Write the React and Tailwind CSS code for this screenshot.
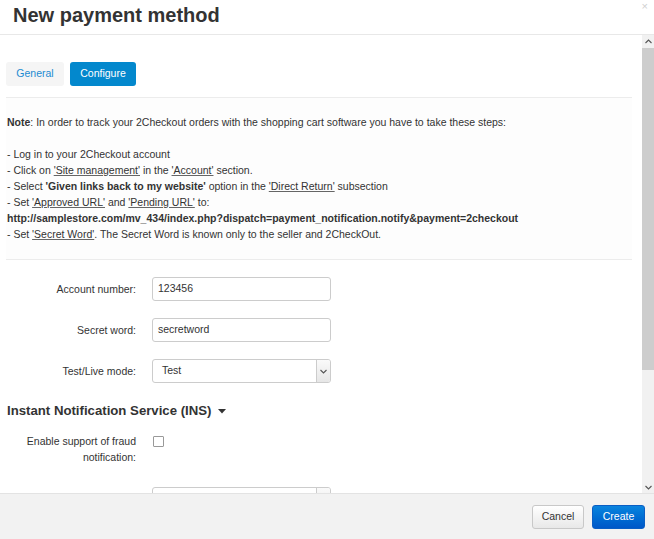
import React from "react";

function Chevron({ up = false }) {
  return (
    <svg width="7" height="5" viewBox="0 0 7 5" className="block">
      {up ? (
        <path d="M0.5 4 L3.5 1 L6.5 4" fill="none" stroke="#555" strokeWidth="1.1" />
      ) : (
        <path d="M0.5 1 L3.5 4 L6.5 1" fill="none" stroke="#555" strokeWidth="1.1" />
      )}
    </svg>
  );
}

function FakeSelect({ value }) {
  return (
    <div className="w-[179px] h-[24px] border border-[#ccc] rounded-[3px] flex items-stretch bg-white">
      <div className="flex-1 flex items-center pl-[9px] text-[10.5px] text-[#333]">{value}</div>
      <div className="w-[14px] border-l border-[#ccc] bg-gradient-to-b from-[#fafafa] to-[#e6e6e6] flex items-center justify-center rounded-r-[2px]">
        <Chevron />
      </div>
    </div>
  );
}

function Row({ label, children }) {
  return (
    <div className="flex items-center">
      <div className="w-[130px] text-right text-[10.5px] text-[#333] leading-[16px]">{label}</div>
      <div className="ml-[16px]">{children}</div>
    </div>
  );
}

function Input({ value }) {
  return (
    <div className="w-[179px] h-[24px] border border-[#ccc] rounded-[3px] flex items-center pl-[5px] text-[10.5px] text-[#333] bg-white">
      {value}
    </div>
  );
}

const U = ({ children }) => <span className="underline decoration-[#666]">{children}</span>;

export default function App() {
  return (
    <div className="w-[654px] h-[539px] flex flex-col bg-white font-['Liberation_Sans',Arial,sans-serif] text-[#333] overflow-hidden">
      <div className="relative h-[35px] border-b border-[#e8e8e8] shrink-0">
        <h1 className="pl-[13px] pt-[3px] text-[20px] leading-[24px] font-bold text-[#333]">New payment method</h1>
        <span className="absolute right-[6px] top-[0px] text-[11px] leading-[12px] text-[#d0d0d0]">×</span>
      </div>

      <div className="flex flex-1 min-h-0">
        <div className="flex-1 overflow-hidden pl-[6px] pr-[10px]">
          <div className="pt-[27px] flex gap-[6px]">
            <div className="w-[58px] h-[24px] rounded-[3px] bg-[#f5f5f5] flex items-center justify-center text-[10.5px] text-[#1d8bd1]">General</div>
            <div className="w-[66px] h-[24px] rounded-[3px] bg-[#0388cd] flex items-center justify-center text-[10.5px] text-white">Configure</div>
          </div>

          <div className="mt-[11px] border-t border-b border-[#ececec] bg-[#fdfdfd] pt-[16px] pb-[17px] pl-[1px] text-[10.5px] leading-[16px] text-[#333]">
            <div><b>Note</b>: In order to track your 2Checkout orders with the shopping cart software you have to take these steps:</div>
            <div className="h-[16px]" />
            <div>- Log in to your 2Checkout account</div>
            <div>- Click on <U>'Site management'</U> in the <U>'Account'</U> section.</div>
            <div>- Select <b>'Given links back to my website'</b> option in the <U>'Direct Return'</U> subsection</div>
            <div>- Set <U>'Approved URL'</U> and <U>'Pending URL'</U> to:</div>
            <div className="font-bold">http://samplestore.com/mv_434/index.php?dispatch=payment_notification.notify&amp;payment=2checkout</div>
            <div>- Set <U>'Secret Word'</U>. The Secret Word is known only to the seller and 2CheckOut.</div>
          </div>

          <div className="mt-[17px] flex flex-col gap-[17px]">
            <Row label="Account number:"><Input value="123456" /></Row>
            <Row label="Secret word:"><Input value="secretword" /></Row>
            <Row label="Test/Live mode:"><FakeSelect value="Test" /></Row>
          </div>

          <div className="mt-[18px] pl-[1px] flex items-center gap-[7px] text-[13.2px] leading-[20px] font-bold text-[#333]">
            <span>Instant Notification Service (INS)</span>
            <svg width="8" height="5" viewBox="0 0 8 5"><path d="M0 0 L8 0 L4 4.5 Z" fill="#333" /></svg>
          </div>

          <div className="mt-[12px] flex items-start">
            <div className="w-[130px] text-right text-[10.5px] leading-[16px] text-[#333]">Enable support of fraud notification:</div>
            <div className="ml-[17px] mt-[3px] w-[11px] h-[11px] border border-[#999] rounded-[1px] bg-white" />
          </div>

          <div className="mt-[22px] ml-[146px]">
            <FakeSelect value="" />
          </div>
        </div>

        <div className="w-[12px] shrink-0 flex flex-col bg-[#f1f1f1]">
          <div className="h-[13px] flex items-center justify-center"><Chevron up /></div>
          <div className="h-[322px] bg-[#cdcdcd]" />
          <div className="flex-1" />
          <div className="h-[12px] flex items-center justify-center"><Chevron /></div>
        </div>
      </div>

      <div className="h-[46px] shrink-0 bg-[#f2f2f2] border-t border-[#e3e3e3] flex items-center justify-end gap-[8px] pr-[9px]">
        <div className="w-[52px] h-[24px] rounded-[3px] border border-[#c8c8c8] bg-gradient-to-b from-white to-[#e8e8e8] flex items-center justify-center text-[10.5px] text-[#333]">Cancel</div>
        <div className="w-[53px] h-[24px] rounded-[3px] border border-[#0a5ec4] bg-gradient-to-b from-[#0b84de] to-[#0057c8] flex items-center justify-center text-[10.5px] text-white">Create</div>
      </div>
    </div>
  );
}
